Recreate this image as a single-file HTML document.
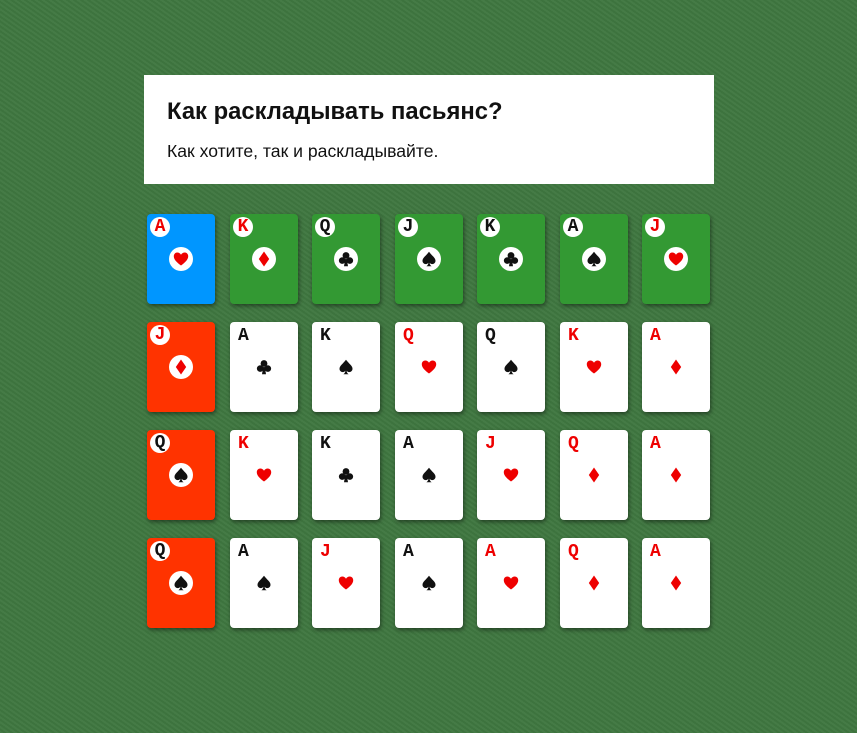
<!DOCTYPE html>
<html><head><meta charset="utf-8"><style>
html,body{margin:0;padding:0}
body{width:857px;height:733px;position:relative;overflow:hidden;background:#3f7740;
background-image:repeating-linear-gradient(35deg,rgba(255,255,255,.03) 0 2px,rgba(0,0,0,.03) 2px 4px);font-family:"Liberation Sans",sans-serif}
.box{position:absolute;left:144px;top:75px;width:570px;height:109px;background:#fff}
.box h1{position:absolute;left:23px;top:23px;margin:0;font-size:23.8px;font-weight:bold;color:#111;white-space:nowrap}
.box p{position:absolute;left:23px;top:66px;margin:0;font-size:17.6px;color:#111;white-space:nowrap}
.c{position:absolute;width:68px;height:90px;border-radius:4px;background:#fff;box-shadow:1px 2px 4px rgba(0,0,0,.45)}
.r{position:absolute;left:8px;top:4px;font-family:"Liberation Mono",monospace;font-weight:bold;font-size:18px;line-height:20px}
.s{position:absolute;left:22px;top:33px;width:24px;height:24px}
.s svg{position:absolute;left:4px;top:4px;width:16px;height:16px}
.k{color:#111;fill:#111}.d{color:#e00;fill:#e00}
.col .r{left:3px;top:3px;width:20px;height:20px;border-radius:50%;background:#fff;text-align:center}
.col .s{background:#fff;border-radius:50%}
.b{background:#0096ff}.g{background:#339933}.o{background:#ff3300}
</style></head><body>
<svg width="0" height="0" style="position:absolute">
<defs>
<symbol id="H" viewBox="0 0 16 16"><path d="M8 14.5C2 10 .8 7.5 .8 5.2C.8 3 2.4 1.5 4.3 1.5C5.8 1.5 7.2 2.4 8 3.7C8.8 2.4 10.2 1.5 11.7 1.5C13.6 1.5 15.2 3 15.2 5.2C15.2 7.5 14 10 8 14.5Z"/></symbol>
<symbol id="D" viewBox="0 0 16 16"><path d="M8 .5L13.2 8L8 15.5L2.8 8Z"/></symbol>
<symbol id="S" viewBox="0 0 16 16"><path d="M8 .8C5 4.8 1.5 6.8 1.5 9.8C1.5 11.8 3 13.1 4.7 13.1C6 13.1 7 12.4 7.4 11.6C7.3 13.2 6.6 14.4 5.4 15.3H10.6C9.4 14.4 8.7 13.2 8.6 11.6C9 12.4 10 13.1 11.3 13.1C13 13.1 14.5 11.8 14.5 9.8C14.5 6.8 11 4.8 8 .8Z"/></symbol>
<symbol id="C" viewBox="0 0 16 16"><circle cx="8" cy="4.5" r="3.4"/><circle cx="4.2" cy="9.6" r="3.3"/><circle cx="11.8" cy="9.6" r="3.3"/><path d="M7.2 8L6 15.3H10L8.8 8Z"/></symbol>
</defs></svg>
<div class="box"><h1>Как раскладывать пасьянс?</h1><p>Как хотите, так и раскладывайте.</p></div>

<div class="c col b" style="left:147px;top:214px"><span class="r d">A</span><span class="s d"><svg><use href="#H"/></svg></span></div>
<div class="c col g" style="left:230px;top:214px"><span class="r d">K</span><span class="s d"><svg><use href="#D"/></svg></span></div>
<div class="c col g" style="left:312px;top:214px"><span class="r k">Q</span><span class="s k"><svg><use href="#C"/></svg></span></div>
<div class="c col g" style="left:395px;top:214px"><span class="r k">J</span><span class="s k"><svg><use href="#S"/></svg></span></div>
<div class="c col g" style="left:477px;top:214px"><span class="r k">K</span><span class="s k"><svg><use href="#C"/></svg></span></div>
<div class="c col g" style="left:560px;top:214px"><span class="r k">A</span><span class="s k"><svg><use href="#S"/></svg></span></div>
<div class="c col g" style="left:642px;top:214px"><span class="r d">J</span><span class="s d"><svg><use href="#H"/></svg></span></div>

<div class="c col o" style="left:147px;top:322px"><span class="r d">J</span><span class="s d"><svg><use href="#D"/></svg></span></div>
<div class="c" style="left:230px;top:322px"><span class="r k">A</span><span class="s k"><svg><use href="#C"/></svg></span></div>
<div class="c" style="left:312px;top:322px"><span class="r k">K</span><span class="s k"><svg><use href="#S"/></svg></span></div>
<div class="c" style="left:395px;top:322px"><span class="r d">Q</span><span class="s d"><svg><use href="#H"/></svg></span></div>
<div class="c" style="left:477px;top:322px"><span class="r k">Q</span><span class="s k"><svg><use href="#S"/></svg></span></div>
<div class="c" style="left:560px;top:322px"><span class="r d">K</span><span class="s d"><svg><use href="#H"/></svg></span></div>
<div class="c" style="left:642px;top:322px"><span class="r d">A</span><span class="s d"><svg><use href="#D"/></svg></span></div>

<div class="c col o" style="left:147px;top:430px"><span class="r k">Q</span><span class="s k"><svg><use href="#S"/></svg></span></div>
<div class="c" style="left:230px;top:430px"><span class="r d">K</span><span class="s d"><svg><use href="#H"/></svg></span></div>
<div class="c" style="left:312px;top:430px"><span class="r k">K</span><span class="s k"><svg><use href="#C"/></svg></span></div>
<div class="c" style="left:395px;top:430px"><span class="r k">A</span><span class="s k"><svg><use href="#S"/></svg></span></div>
<div class="c" style="left:477px;top:430px"><span class="r d">J</span><span class="s d"><svg><use href="#H"/></svg></span></div>
<div class="c" style="left:560px;top:430px"><span class="r d">Q</span><span class="s d"><svg><use href="#D"/></svg></span></div>
<div class="c" style="left:642px;top:430px"><span class="r d">A</span><span class="s d"><svg><use href="#D"/></svg></span></div>

<div class="c col o" style="left:147px;top:538px"><span class="r k">Q</span><span class="s k"><svg><use href="#S"/></svg></span></div>
<div class="c" style="left:230px;top:538px"><span class="r k">A</span><span class="s k"><svg><use href="#S"/></svg></span></div>
<div class="c" style="left:312px;top:538px"><span class="r d">J</span><span class="s d"><svg><use href="#H"/></svg></span></div>
<div class="c" style="left:395px;top:538px"><span class="r k">A</span><span class="s k"><svg><use href="#S"/></svg></span></div>
<div class="c" style="left:477px;top:538px"><span class="r d">A</span><span class="s d"><svg><use href="#H"/></svg></span></div>
<div class="c" style="left:560px;top:538px"><span class="r d">Q</span><span class="s d"><svg><use href="#D"/></svg></span></div>
<div class="c" style="left:642px;top:538px"><span class="r d">A</span><span class="s d"><svg><use href="#D"/></svg></span></div>
</body></html>
